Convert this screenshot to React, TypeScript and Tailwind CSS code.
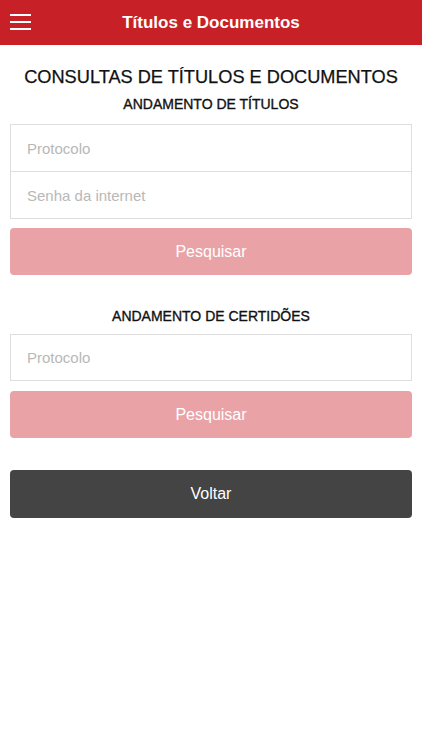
export default function App() {
  const font = { fontFamily: '"Helvetica Neue", "Liberation Sans", Arial, sans-serif' };
  return (
    <div className="min-h-[750px] w-[422px] bg-white" style={font}>
      {/* Cabeçalho */}
      <header className="relative flex h-[45px] items-center justify-center bg-[#c82027]">
        <button className="absolute left-[10px] top-[14px] flex w-[21px] flex-col gap-[5px]">
          <span className="h-[2px] w-full bg-white" />
          <span className="h-[2px] w-full bg-white" />
          <span className="h-[2px] w-full bg-white" />
        </button>
        <h1 className="text-[17px] font-bold text-white">Títulos e Documentos</h1>
      </header>

      <main className="px-[10px]">
        <h2 className="mt-[21px] text-center text-[18.2px] leading-[22px] text-[#111] [-webkit-text-stroke:0.25px_#111]">
          CONSULTAS DE TÍTULOS E DOCUMENTOS
        </h2>
        <h3 className="mt-[8px] text-center text-[14px] leading-[17px] text-[#111] [-webkit-text-stroke:0.35px_#111]">
          ANDAMENTO DE TÍTULOS
        </h3>

        {/* Andamento de títulos */}
        <div className="mt-[11px] border border-[#dedede]">
          <input
            placeholder="Protocolo"
            className="block h-[47px] w-full border-b border-[#dedede] px-[16px] text-[15px] outline-none placeholder:text-[#b8b8b8]"
          />
          <input
            placeholder="Senha da internet"
            className="block h-[46px] w-full px-[16px] text-[15px] outline-none placeholder:text-[#b8b8b8]"
          />
        </div>
        <button className="mt-[9px] h-[47px] w-full rounded-[4px] bg-[#e9a3a7] text-[16px] text-white">
          Pesquisar
        </button>

        {/* Andamento de certidões */}
        <h3 className="mt-[33px] text-center text-[14px] leading-[17px] text-[#111] [-webkit-text-stroke:0.35px_#111]">
          ANDAMENTO DE CERTIDÕES
        </h3>
        <div className="mt-[9px] border border-[#dedede]">
          <input
            placeholder="Protocolo"
            className="block h-[45px] w-full px-[16px] text-[15px] outline-none placeholder:text-[#b8b8b8]"
          />
        </div>
        <button className="mt-[10px] h-[47px] w-full rounded-[4px] bg-[#e9a3a7] text-[16px] text-white">
          Pesquisar
        </button>

        <button className="mt-[32px] h-[48px] w-full rounded-[4px] bg-[#444444] text-[16px] text-white">
          Voltar
        </button>
      </main>
    </div>
  );
}
